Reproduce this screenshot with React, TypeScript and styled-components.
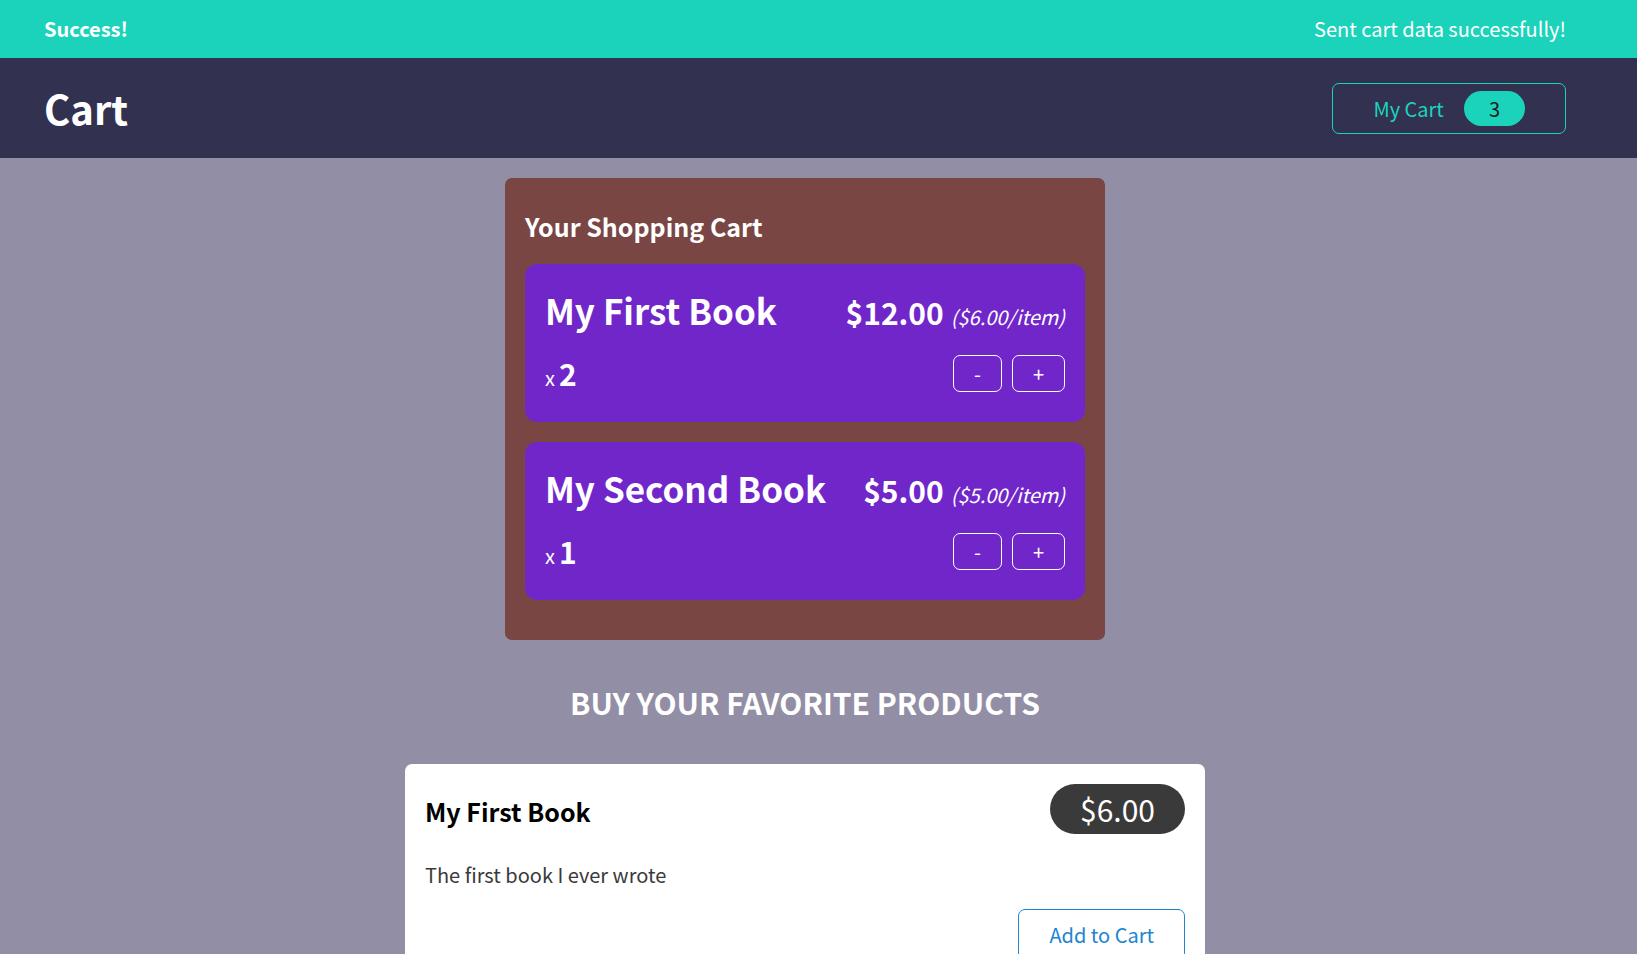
import React from 'react';
import styled, { createGlobalStyle } from 'styled-components';

const Global = createGlobalStyle`
  * { box-sizing: border-box; }
  html { font-family: 'Noto Sans CJK JP', sans-serif; font-size: 20px; line-height: 29px; }
  body { margin: 0; background: #928ea5; color: #ffffff; }
  h1, h2, h3, p, ul { margin: 0; padding: 0; }
  ul { list-style: none; }
  button { font: inherit; cursor: pointer; background: transparent; }
`;

const Notification = styled.section`
  display: flex;
  justify-content: space-between;
  align-items: center;
  padding: 14px 71px 15px 44px;
  background: #1bd3bb;
`;
const NoticeTitle = styled.h2`
  font-size: 20px;
`;
const Header = styled.header`
  display: flex;
  justify-content: space-between;
  align-items: center;
  padding: 21px 71px 21px 44px;
  background: #333150;
`;
const Logo = styled.h1`
  font-size: 40px;
  line-height: 58px;
`;
const CartButton = styled.button`
  display: flex;
  align-items: center;
  gap: 20px;
  padding: 7px 40px;
  border: 1px solid #1bd3bb;
  border-radius: 7px;
  color: #1bd3bb;
`;
const Badge = styled.span`
  padding: 3px 25px;
  border-radius: 30px;
  background: #1bd3bb;
  color: #1d1d1d;
`;
const Main = styled.main`
  padding: 20px 27px 0 0;
`;
const Cart = styled.section`
  width: 600px;
  max-width: 90%;
  margin: 0 auto;
  padding: 30px 20px 40px;
  border-radius: 7px;
  background: #794644;
`;
const CartTitle = styled.h2`
  margin-bottom: 20px;
  font-size: 25px;
  line-height: 36px;
`;
const CartList = styled.ul`
  display: grid;
  gap: 20px;
`;
const CartItem = styled.li`
  padding: 20px 20px 26px;
  border-radius: 12px;
  background: #7126ca;
`;
const Row = styled.div`
  display: flex;
  justify-content: space-between;
  align-items: baseline;
`;
const ItemTitle = styled.h3`
  font-size: 35px;
  line-height: 51px;
`;
const Price = styled.div`
  font-size: 30px;
  font-weight: 700;
`;
const ItemPrice = styled.span`
  margin-left: 7px;
  font-size: 20px;
  font-weight: 400;
  font-style: italic;
`;
const Controls = styled.div`
  display: flex;
  justify-content: space-between;
  align-items: center;
  margin-top: 16px;
`;
const Quantity = styled.p`
  display: flex;
  align-items: baseline;
  gap: 4px;
`;
const Count = styled.span`
  font-size: 30px;
  font-weight: 700;
  line-height: 45px;
`;
const Actions = styled.div`
  display: flex;
  gap: 10px;
`;
const Step = styled.button`
  padding: 3px 20px;
  border: 1px solid #ffffff;
  border-radius: 7px;
  color: #ffffff;
`;
const Products = styled.section`
  width: 800px;
  max-width: 90%;
  margin: 40px auto 0;
`;
const ProductsTitle = styled.h2`
  margin-bottom: 40px;
  font-size: 30px;
  line-height: 44px;
  text-align: center;
  text-transform: uppercase;
`;
const Product = styled.article`
  padding: 20px;
  border-radius: 7px;
  background: #ffffff;
  color: #3a3a3a;
`;
const ProductHeader = styled.header`
  display: flex;
  justify-content: space-between;
  align-items: baseline;
  margin-bottom: 26px;
`;
const ProductTitle = styled.h3`
  color: #000000;
  font-size: 25px;
  font-weight: 700;
  line-height: 36px;
`;
const ProductPrice = styled.div`
  padding: 3px 30px;
  border-radius: 30px;
  background: #3a3a3a;
  color: #ffffff;
  font-size: 30px;
  line-height: 44px;
`;
const ProductActions = styled.div`
  display: flex;
  justify-content: flex-end;
  margin-top: 20px;
`;
const AddButton = styled.button`
  padding: 10px 30px;
  border: 1px solid #2085d0;
  border-radius: 7px;
  color: #2085d0;
`;

const items = [
  { title: 'My First Book', total: '$12.00', price: '$6.00', quantity: 2 },
  { title: 'My Second Book', total: '$5.00', price: '$5.00', quantity: 1 },
];

export default function App() {
  return (
    <>
      <Global />
      <Notification>
        <NoticeTitle>Success!</NoticeTitle>
        <p>Sent cart data successfully!</p>
      </Notification>
      <Header>
        <Logo>Cart</Logo>
        <CartButton>
          <span>My Cart</span>
          <Badge>3</Badge>
        </CartButton>
      </Header>
      <Main>
        <Cart>
          <CartTitle>Your Shopping Cart</CartTitle>
          <CartList>
            {items.map((item) => (
              <CartItem key={item.title}>
                <Row>
                  <ItemTitle>{item.title}</ItemTitle>
                  <Price>
                    {item.total}
                    <ItemPrice>({item.price}/item)</ItemPrice>
                  </Price>
                </Row>
                <Controls>
                  <Quantity>
                    x<Count>{item.quantity}</Count>
                  </Quantity>
                  <Actions>
                    <Step>-</Step>
                    <Step>+</Step>
                  </Actions>
                </Controls>
              </CartItem>
            ))}
          </CartList>
        </Cart>
        <Products>
          <ProductsTitle>Buy your favorite products</ProductsTitle>
          <Product>
            <ProductHeader>
              <ProductTitle>My First Book</ProductTitle>
              <ProductPrice>$6.00</ProductPrice>
            </ProductHeader>
            <p>The first book I ever wrote</p>
            <ProductActions>
              <AddButton>Add to Cart</AddButton>
            </ProductActions>
          </Product>
        </Products>
      </Main>
    </>
  );
}
